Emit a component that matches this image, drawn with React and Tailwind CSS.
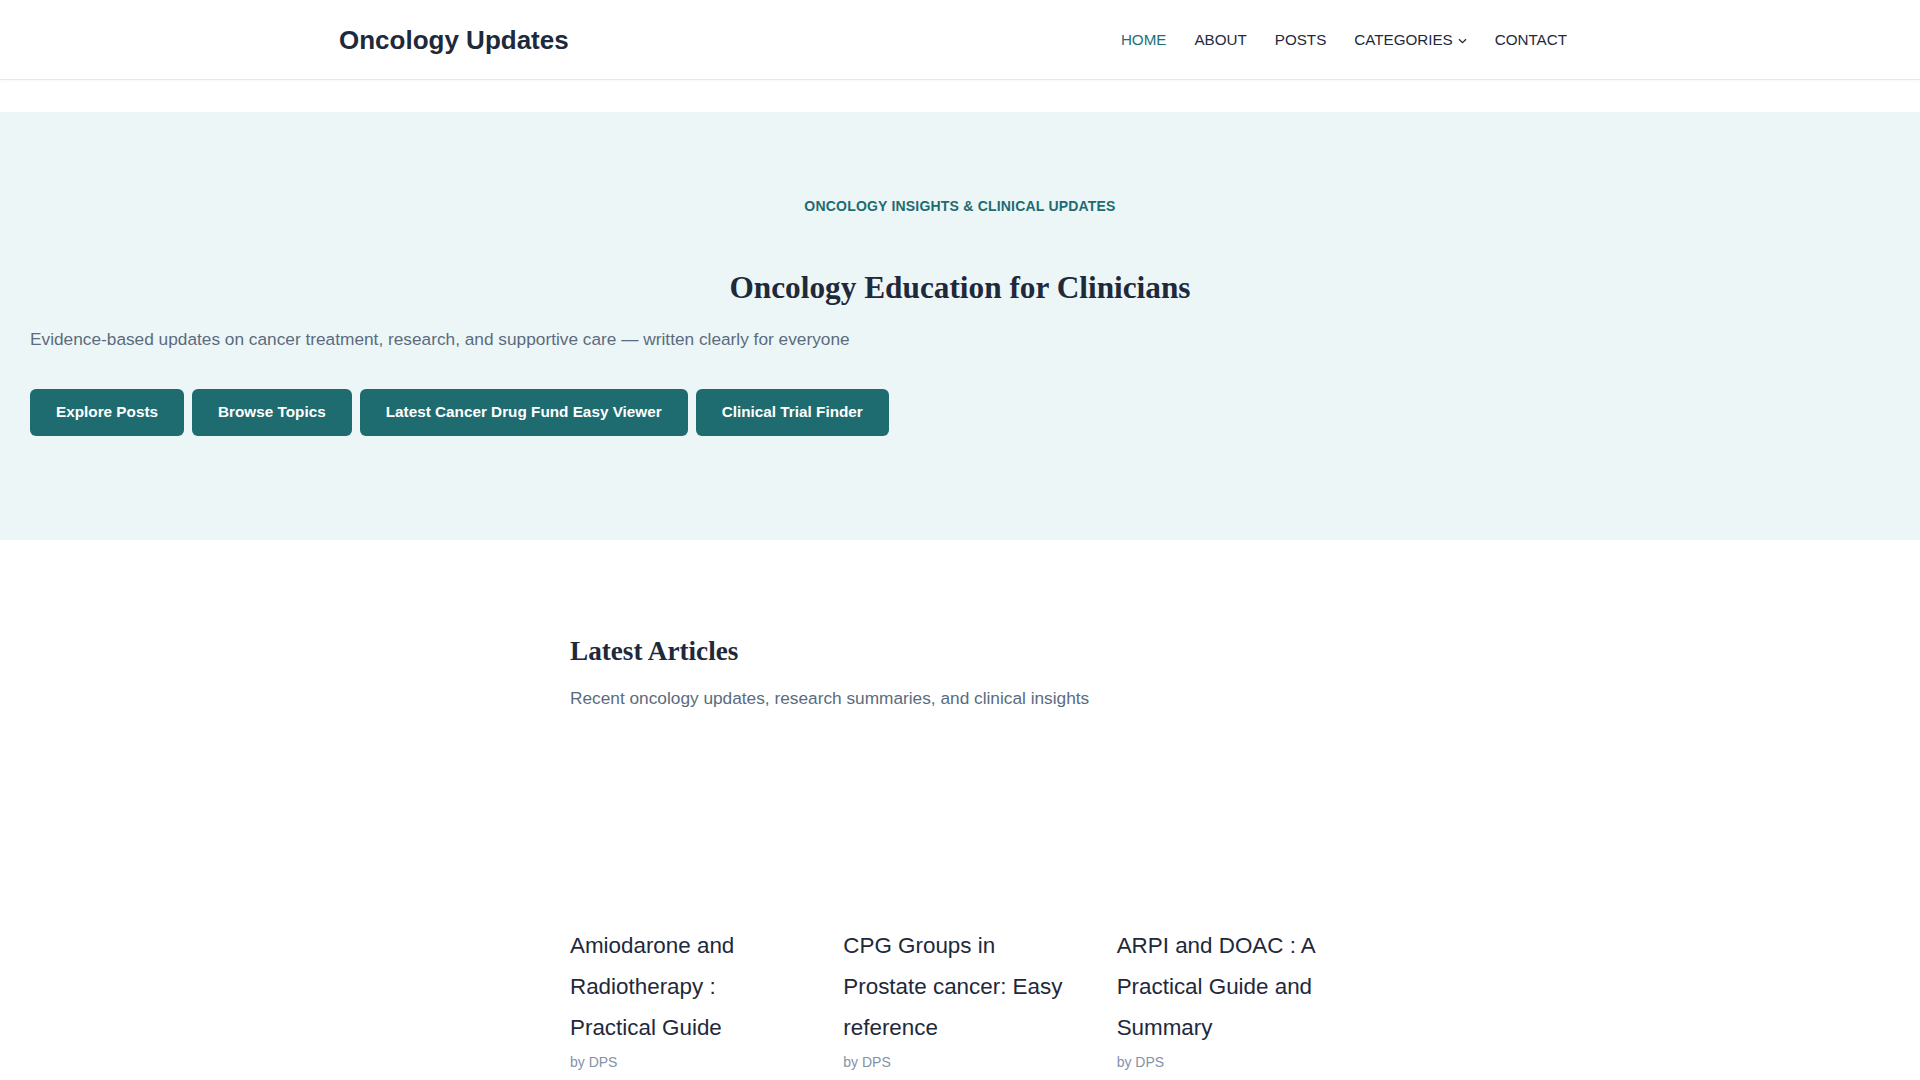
import React from "react";

const sans = { fontFamily: '"Liberation Sans", Arial, sans-serif' };
const serif = { fontFamily: '"Liberation Serif", "Times New Roman", serif' };

const articles = [
  { title: "Amiodarone and Radiotherapy : Practical Guide" },
  { title: "CPG Groups in Prostate cancer: Easy reference" },
  { title: "ARPI and DOAC : A Practical Guide and Summary" },
];

function Header() {
  return (
    <header className="h-[80px] border-b border-[#e3e9f0] bg-white shadow-[0_1px_3px_rgba(15,23,42,0.03)]">
      <div className="mx-auto flex h-full max-w-[1280px] items-center justify-between px-[19px]">
        <a className="text-[26px] font-bold leading-none text-[#1e293b]">Oncology Updates</a>
        <nav className="flex items-center text-[15.2px] leading-none text-[#1e293b]">
          <a className="px-[14px] text-[#1e7078]">HOME</a>
          <a className="px-[14px]">ABOUT</a>
          <a className="px-[14px]">POSTS</a>
          <a className="flex items-center gap-[5px] px-[14px]">
            CATEGORIES
            <svg width="9" height="6" viewBox="0 0 9 6" className="mt-[3px]">
              <path d="M1 1.2 L4.5 4.6 L8 1.2" fill="none" stroke="#1e293b" strokeWidth="1.3" />
            </svg>
          </a>
          <a className="px-[14px]">CONTACT</a>
        </nav>
      </div>
    </header>
  );
}

function Hero() {
  const btns = ["Explore Posts", "Browse Topics", "Latest Cancer Drug Fund Easy Viewer", "Clinical Trial Finder"];
  return (
    <section className="mt-8 bg-[#edf6f7] px-[30px] pb-[104px] pt-[84px]">
      <p className="text-center text-[14px] font-bold leading-[20px] tracking-[0.2px] text-[#1e6b72]">
        ONCOLOGY INSIGHTS &amp; CLINICAL UPDATES
      </p>
      <h1 className="mt-[53px] text-center text-[31.3px] font-bold leading-[38px] text-[#1e293b]" style={serif}>
        Oncology Education for Clinicians
      </h1>
      <p className="mt-[19px] text-[17.28px] leading-[27px] text-[#5b6b7d]">
        Evidence-based updates on cancer treatment, research, and supportive care — written clearly for everyone
      </p>
      <div className="mt-[36px] flex gap-[8px]">
        {btns.map((b) => (
          <a
            key={b}
            className="flex h-[47px] items-center rounded-[6px] bg-[#1e6b70] px-[26px] text-[15.3px] font-bold text-white"
          >
            {b}
          </a>
        ))}
      </div>
    </section>
  );
}

function Latest() {
  return (
    <section className="mx-auto max-w-[780px] pt-[94px]">
      <h2 className="text-[27.2px] font-bold leading-[34px] text-[#1e293b]" style={serif}>
        Latest Articles
      </h2>
      <p className="mt-[17px] text-[17.28px] leading-[27px] text-[#5b6b7d]">
        Recent oncology updates, research summaries, and clinical insights
      </p>
      <div className="mt-[24px] grid grid-cols-3 gap-x-[40px]">
        {articles.map((a) => (
          <article key={a.title} className="flex flex-col">
            <div className="h-[189px]" />
            <h3 className="text-[22.4px] leading-[41px] text-[#1e293b]">{a.title}</h3>
            <p className="mt-[4px] text-[14px] leading-[20px] text-[#8492a6]">by DPS</p>
          </article>
        ))}
      </div>
    </section>
  );
}

export default function App() {
  return (
    <div className="min-h-screen bg-white pb-10" style={sans}>
      <Header />
      <Hero />
      <Latest />
    </div>
  );
}
